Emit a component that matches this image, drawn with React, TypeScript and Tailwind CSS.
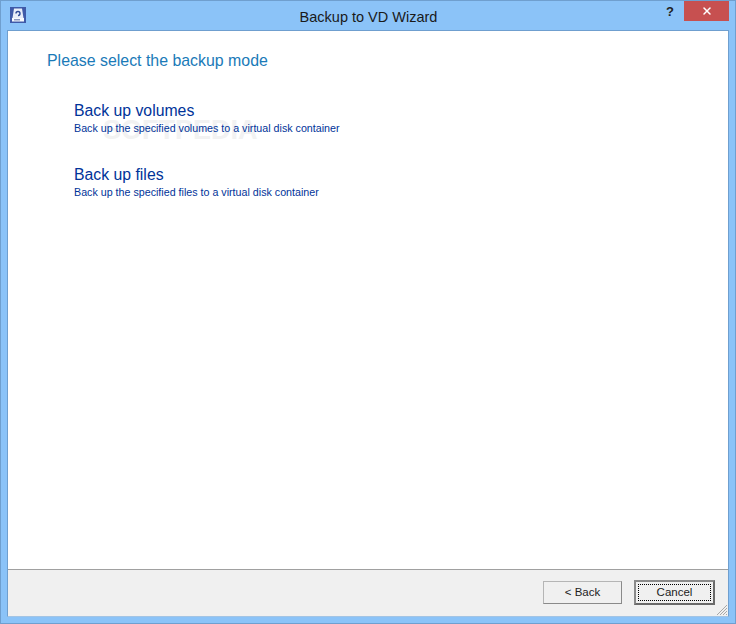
import React from 'react';
import { X } from 'lucide-react';

const ModeOption: React.FC<{ title: string; text: string }> = ({ title, text }) => (
  <div className="flex flex-col">
    <div className="text-[15.8px] leading-[20px] text-[#003399]">{title}</div>
    <div className="mt-[1px] text-[10.7px] leading-[13px] text-[#003399] relative z-10">{text}</div>
  </div>
);

const HddIcon = () => (
  <svg width="16" height="16" viewBox="0 0 16 16">
    <rect width="16" height="16" fill="#3f5aa8" />
    <path d="M4 1.5h8l1.5 9.5h-11z" fill="#e8edf8" />
    <rect x="2" y="11" width="12" height="3.5" fill="#f7f9fd" />
    <rect x="4" y="12" width="6" height="1.5" fill="#8a97c0" />
    <path d="M6 6.5a2 2 0 1 1 2 2" fill="none" stroke="#2f4a98" strokeWidth="1.4" />
  </svg>
);

export default function App() {
  return (
    <div
      className="w-[736px] h-[624px] bg-[#8bc3f8] border border-[#6f9fcf] flex flex-col overflow-hidden"
      style={{ fontFamily: '"Liberation Sans", Arial, sans-serif' }}
    >
      {/* title bar */}
      <div className="h-[29px] shrink-0 flex items-start pl-[9px] pr-[6px]">
        <div className="mt-[6px]">
          <HddIcon />
        </div>
        <div className="flex-1 text-center text-[14.5px] leading-[18px] mt-[7px] text-[#1a1a1a] pl-[45px]">Backup to VD Wizard</div>
        <div className="text-[13px] leading-[13px] font-bold text-[#222] mt-[4px] mr-[10px]">?</div>
        <div className="w-[45px] h-[20px] bg-[#c75050] flex items-center justify-center">
          <X size={12} strokeWidth={3} color="#fff" />
        </div>
      </div>

      {/* client area */}
      <div className="mx-[6px] mb-[6px] flex-1 border border-[#6f9fcf] border-b-[#a3c4e4] flex flex-col bg-white">
        <div className="flex-1 pt-[20px] relative">
          <div className="pl-[39px] text-[15.9px] leading-[20px] text-[#1a7ab8]">Please select the backup mode</div>
          <div className="pl-[66px] pt-[30px] flex flex-col gap-[30px]">
            <ModeOption title="Back up volumes" text="Back up the specified volumes to a virtual disk container" />
            <ModeOption title="Back up files" text="Back up the specified files to a virtual disk container" />
          </div>
          <div className="absolute left-[95px] top-[85px] text-[27px] leading-[28px] font-bold text-[#f2f2f2]">SOFTPEDIA</div>
        </div>

        {/* button strip */}
        <div className="h-[47px] shrink-0 bg-[#f0f0f0] border-t border-[#a0a0a0] flex items-start justify-end pt-[11px] pr-[13px] gap-[12px] relative">
          <button className="w-[79px] h-[23px] bg-[#f0f0f0] border border-[#b5b5b5] border-r-[#8a8a8a] border-b-[#8a8a8a] text-[11.5px] text-[#222] flex items-center justify-center">
            &lt; Back
          </button>
          <button className="w-[81px] h-[25px] -mt-[1px] bg-[#f0f0f0] border-2 border-[#6a6a6a] border-t-[#8a8a8a] border-l-[#8a8a8a] p-[2px] text-[11.5px] text-[#222] flex">
            <span className="flex-1 h-full border border-dotted border-black flex items-center justify-center">Cancel</span>
          </button>
          <svg className="absolute right-0 bottom-0" width="12" height="12" viewBox="0 0 12 12">
            <path d="M11 1L1 11M11 4L4 11M11 7L7 11M11 10L10 11" stroke="#a8a8a8" strokeWidth="1" />
          </svg>
        </div>
      </div>
    </div>
  );
}
